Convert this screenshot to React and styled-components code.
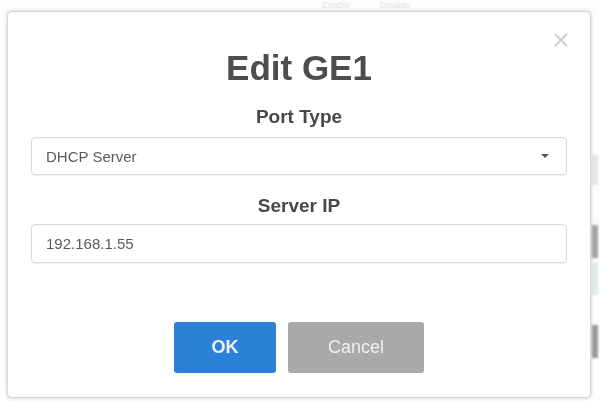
import React from 'react';
import styled, { createGlobalStyle } from 'styled-components';

const GlobalStyle = createGlobalStyle`
  html, body {
    margin: 0;
    padding: 0;
    background: #ffffff;
    font-family: "Liberation Sans", Arial, sans-serif;
  }
  * { box-sizing: border-box; }
`;

const Page = styled.div`
  width: 601px;
  height: 401px;
  overflow: hidden;
  display: flex;
  justify-content: space-between;
  background: #fdfdfd;
`;

const PageHeader = styled.div`
  padding: 1px 0 0 322px;
  display: flex;
  gap: 30px;
  font-size: 9px;
  line-height: 9px;
  color: #e2e2e2;
  height: 10px;
`;

const SideRail = styled.div`
  width: 9px;
  display: flex;
  flex-direction: column;
  padding-top: 155px;
`;

const RailBlock = styled.div`
  width: 6px;
  margin-top: ${p => p.$top}px;
  height: ${p => p.$h}px;
  background: ${p => p.$c};
  filter: blur(0.8px);
`;

const Overlay = styled.div`
  position: fixed;
  inset: 0;
  padding: 11px 0 0 7px;
`;

const Dialog = styled.div`
  position: relative;
  width: 584px;
  height: 387px;
  background: #ffffff;
  border: 1px solid #d6d6d6;
  border-radius: 5px;
  box-shadow: 0 0 3px 1px rgba(0, 0, 0, 0.12);
  padding: 38px 23px 0;
  display: flex;
  flex-direction: column;
  align-items: stretch;
`;

const CloseButton = styled.button`
  position: absolute;
  top: 18px;
  right: 19px;
  width: 20px;
  height: 20px;
  padding: 0;
  border: none;
  background: transparent;
  display: flex;
  align-items: center;
  justify-content: center;
`;

const Title = styled.h2`
  margin: 0;
  font-size: 35px;
  line-height: 36px;
  font-weight: bold;
  color: #4d4d4d;
  text-align: center;
`;

const Label = styled.div`
  margin-top: ${p => p.$top}px;
  font-size: 19px;
  line-height: 20px;
  font-weight: bold;
  color: #484848;
  text-align: center;
`;

const Field = styled.div`
  margin-top: ${p => p.$top}px;
  height: ${p => p.$h}px;
  border: 1px solid #d9d9d9;
  border-radius: 4px;
  box-shadow: inset 0 1px 1px rgba(0, 0, 0, 0.04), 0 1px 1px rgba(0, 0, 0, 0.06);
  display: flex;
  align-items: center;
  justify-content: space-between;
  padding: 0 17px 0 14px;
  font-size: 15px;
  color: #5a5a5a;
`;

const Caret = styled.span`
  width: 0;
  height: 0;
  border-left: 4px solid transparent;
  border-right: 4px solid transparent;
  border-top: 4px solid #555;
`;

const Actions = styled.div`
  margin-top: 59px;
  display: flex;
  justify-content: center;
  gap: 12px;
`;

const Button = styled.button`
  width: ${p => p.$w}px;
  height: 51px;
  border: none;
  border-radius: 3px;
  background: ${p => p.$bg};
  color: ${p => p.$fg};
  font-family: "Liberation Sans", Arial, sans-serif;
  font-size: 18px;
  font-weight: ${p => p.$bold ? 'bold' : 'normal'};
`;

export default function App() {
  return (
    <>
      <GlobalStyle />
      <Page>
        <PageHeader>
          <span>Enable</span>
          <span>Disable</span>
        </PageHeader>
        <SideRail>
          <RailBlock $top={0} $h={30} $c="#e6e6e6" />
          <RailBlock $top={40} $h={33} $c="#a3a3a3" />
          <RailBlock $top={4} $h={33} $c="#dcefe7" />
          <RailBlock $top={30} $h={33} $c="#999999" />
        </SideRail>
      </Page>
      <Overlay>
        <Dialog>
          <CloseButton aria-label="Close">
            <svg width="16" height="16" viewBox="0 0 16 16">
              <path d="M2 2 L14 14 M14 2 L2 14" stroke="#cfcfcf" strokeWidth="2" />
            </svg>
          </CloseButton>
          <Title>Edit GE1</Title>
          <Label $top={21}>Port Type</Label>
          <Field $top={10} $h={38}>
            <span>DHCP Server</span>
            <Caret />
          </Field>
          <Label $top={21}>Server IP</Label>
          <Field $top={8} $h={39}>
            <span>192.168.1.55</span>
          </Field>
          <Actions>
            <Button $w={102} $bg="#2d80d7" $fg="#eaf3ff" $bold>OK</Button>
            <Button $w={136} $bg="#a9a9a9" $fg="#efefef">Cancel</Button>
          </Actions>
        </Dialog>
      </Overlay>
    </>
  );
}
